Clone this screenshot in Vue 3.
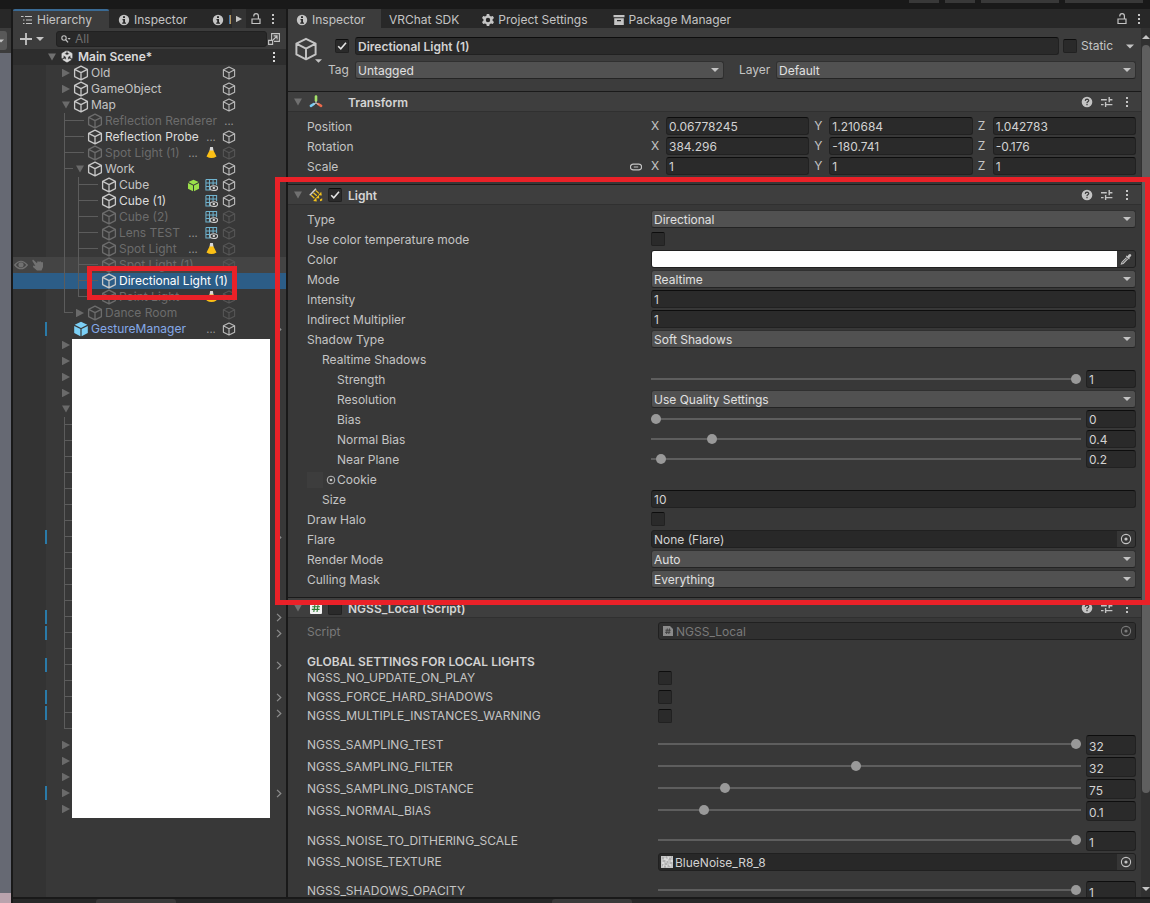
<script setup>
import { ref } from 'vue'

const objects = [
  { name: 'Old', depth: 0, arrow: 'right', cube: 'on' },
  { name: 'GameObject', depth: 0, arrow: 'right', cube: 'on' },
  { name: 'Map', depth: 0, arrow: 'down', cube: 'on' },
  { name: 'Reflection Renderer', depth: 1, dim: true, cube: 'dots' },
  { name: 'Reflection Probe', depth: 1, bright: true, mid: 'dots', cube: 'on' },
  { name: 'Spot Light (1)', depth: 1, dim: true, first: 'dots', mid: 'lamp', cube: 'off' },
  { name: 'Work', depth: 1, arrow: 'down', cube: 'on' },
  { name: 'Cube', depth: 2, first: 'solid', mid: 'mesh', cube: 'on' },
  { name: 'Cube (1)', depth: 2, bright: true, mid: 'mesh', cube: 'on' },
  { name: 'Cube (2)', depth: 2, dim: true, mid: 'mesh', cube: 'off' },
  { name: 'Lens TEST', depth: 2, dim: true, first: 'dots', mid: 'mesh', cube: 'off' },
  { name: 'Spot Light', depth: 2, dim: true, first: 'dots', mid: 'lamp', cube: 'off' },
  { name: 'Spot Light (1)', depth: 2, dim: true, hover: true, cube: 'off' },
  { name: 'Directional Light (1)', depth: 2, selected: true },
  { name: 'Point Light', depth: 2, dim: true, last: true, mid: 'lamp', cube: 'off' },
  { name: 'Dance Room', depth: 1, arrow: 'right', dim: true, last: true, cube: 'off' },
  { name: 'GestureManager', depth: 0, prefab: true, changed: true, chevron: true, mid: 'dots', cube: 'on' },
]

const changedRows = [12, 17, 18, 20, 22, 23, 28]
const hiddenObjects = Array.from({ length: 30 }, (_, i) => ({
  arrow: i < 4 || i > 24 ? 'right' : i === 4 ? 'down' : '',
  branch: i > 4 && i < 25,
  last: i === 24,
  changed: changedRows.includes(i),
}))

const vectors = [
  { label: 'Position', values: ['0.06778245', '1.210684', '1.042783'] },
  { label: 'Rotation', values: ['384.296', '-180.741', '-0.176'] },
  { label: 'Scale', values: ['1', '1', '1'], link: true },
]

const light = [
  { label: 'Type', kind: 'select', value: 'Directional' },
  { label: 'Use color temperature mode', kind: 'check' },
  { label: 'Color', kind: 'color' },
  { label: 'Mode', kind: 'select', value: 'Realtime' },
  { label: 'Intensity', kind: 'text', value: '1' },
  { label: 'Indirect Multiplier', kind: 'text', value: '1' },
  { label: 'Shadow Type', kind: 'select', value: 'Soft Shadows' },
  { label: 'Realtime Shadows', kind: 'none', indent: 1 },
  { label: 'Strength', kind: 'slider', value: '1', at: 1, indent: 2 },
  { label: 'Resolution', kind: 'select', value: 'Use Quality Settings', indent: 2 },
  { label: 'Bias', kind: 'slider', value: '0', at: 0, indent: 2 },
  { label: 'Normal Bias', kind: 'slider', value: '0.4', at: 0.133, indent: 2 },
  { label: 'Near Plane', kind: 'slider', value: '0.2', at: 0.012, indent: 2 },
  { label: 'Cookie', kind: 'none', cookie: true },
  { label: 'Size', kind: 'text', value: '10', indent: 1 },
  { label: 'Draw Halo', kind: 'check' },
  { label: 'Flare', kind: 'object', value: 'None (Flare)' },
  { label: 'Render Mode', kind: 'select', value: 'Auto' },
  { label: 'Culling Mask', kind: 'select', value: 'Everything' },
]

const toggles = ['NGSS_NO_UPDATE_ON_PLAY', 'NGSS_FORCE_HARD_SHADOWS', 'NGSS_MULTIPLE_INSTANCES_WARNING']
const sampling = [
  { label: 'NGSS_SAMPLING_TEST', value: '32', at: 1 },
  { label: 'NGSS_SAMPLING_FILTER', value: '32', at: 0.467 },
  { label: 'NGSS_SAMPLING_DISTANCE', value: '75', at: 0.15 },
  { label: 'NGSS_NORMAL_BIAS', value: '0.1', at: 0.1 },
]
const lightOn = ref(true)
const objectOn = ref(true)
</script>

<template>
  <svg class="sprite" aria-hidden="true">
    <symbol id="i-cube" viewBox="0 0 16 16"><path d="M8 1.2 14.4 4.4V11.6L8 14.9 1.6 11.6V4.4ZM1.6 4.4 8 7.7 14.4 4.4M8 7.7V14.9" fill="none" stroke="currentColor" stroke-width="1.3" stroke-linejoin="round" /></symbol>
    <symbol id="i-solid" viewBox="0 0 16 16"><path d="M8 .8 14.3 3.8 8 7 1.7 3.8ZM1.2 5 7.4 8.1V15.2L1.2 12ZM14.8 5 8.6 8.1V15.2L14.8 12Z" fill="currentColor" /></symbol>
    <symbol id="i-right" viewBox="0 0 8 8"><path d="M0 0H.5L8 4 .5 8H0Z" fill="currentColor" /></symbol>
    <symbol id="i-down" viewBox="0 0 8 8"><path d="M0 .5H8L4 7.5Z" fill="currentColor" /></symbol>
    <symbol id="i-caret" viewBox="0 0 8 4"><path d="M0 0H8L4 4Z" fill="currentColor" /></symbol>
    <symbol id="i-list" viewBox="0 0 12 10"><path d="M4 1.5H11M5 5H11M5 8.5H11" stroke="currentColor" stroke-width="1.2" /><path d="M0 1.5H2.5M2 5H3.5M2 8.5H3.5" stroke="currentColor" stroke-width="1.2" /></symbol>
    <symbol id="i-info" viewBox="0 0 12 12"><circle cx="6" cy="6" r="5.2" fill="currentColor" /><path d="M5 2.3H7V4H5ZM4.5 5H7V8.5H8V9.7H4.2V8.5H5.2V6.2H4.5Z" fill="#282828" /></symbol>
    <symbol id="i-lock" viewBox="0 0 10 12"><path d="M1 6H9V10.5H1ZM2.8 3.5V3A2.2 2.2 0 0 1 7.4 3V6" fill="none" stroke="currentColor" stroke-width="1.2" /></symbol>
    <symbol id="i-menu" viewBox="0 0 4 12"><path d="M1 1H3V3H1ZM1 5H3V7H1ZM1 9H3V11H1Z" fill="currentColor" /></symbol>
    <symbol id="i-gear" viewBox="0 0 14 14"><path d="M5.8 1H8.2L8.6 2.8 10 3.5 11.8 2.9 13 5 11.6 6.2V7.8L13 9 11.8 11.1 10 10.5 8.6 11.2 8.2 13H5.8L5.4 11.2 4 10.5 2.2 11.1 1 9 2.4 7.8V6.2L1 5 2.2 2.9 4 3.5 5.4 2.8ZM7 4.8A2.2 2.2 0 1 0 7 9.2 2.2 2.2 0 0 0 7 4.8Z" fill="currentColor" fill-rule="evenodd" /></symbol>
    <symbol id="i-box" viewBox="0 0 12 12"><path d="M.5 1H11.5V3.3H.5ZM1.2 4.2H10.8V11H1.2ZM4 6V7.3H8V6Z" fill="currentColor" fill-rule="evenodd" /></symbol>
    <symbol id="i-plus" viewBox="0 0 12 12"><path d="M6 0V12M0 6H12" stroke="currentColor" stroke-width="1.8" /></symbol>
    <symbol id="i-search" viewBox="0 0 10 8"><circle cx="3" cy="3" r="2.2" fill="none" stroke="currentColor" stroke-width="1.1" /><path d="M4.6 4.6 7 7.4" stroke="currentColor" stroke-width="1.3" /><path d="M6.5 3H9.7L8.1 4.8Z" fill="currentColor" /></symbol>
    <symbol id="i-open" viewBox="0 0 12 12"><path d="M3.6 7V.6H11.4V8.4H6M5 7 9 3M5.6 2.9H9.1V6.4" fill="none" stroke="currentColor" stroke-width="1.1" /><path d="M.6 7.4H4.6V11.4H.6Z" fill="none" stroke="currentColor" stroke-width="1.1" /></symbol>
    <symbol id="i-unity" viewBox="0 0 16 16"><path d="M8.8 1 13.8 3.9V9.5L12.2 8.6V5.9L9 7.8V11.4L11.2 10.1 12.8 11 8 13.9 3.2 11 4.8 10.1 7 11.4V7.8L3.8 5.9V8.6L2.2 9.5V3.9L7.2 1V2.9L5 4.2 8 6 11 4.2 8.8 2.9Z" fill="currentColor" stroke="currentColor" stroke-width=".7" /></symbol>
    <symbol id="i-lamp" viewBox="0 0 12 14"><path d="M4.6 1H7.4L8 5H4Z" fill="#d9d9d9" /><path d="M4 4.5H8L11 10.5Q6 13.5 1 10.5Z" fill="#fcc015" /></symbol>
    <symbol id="i-mesh" viewBox="0 0 14 14"><path d="M1 1H12.5V7M1 1V12.5H6M1 4.8H12.5M1 8.7H6M4.8 1V12.5M8.7 1V7" fill="none" stroke="#6fb3cf" stroke-width="1.1" /><ellipse cx="9.5" cy="10.3" rx="4" ry="2.6" fill="#383838" stroke="#d0d0d0" stroke-width="1.1" /><circle cx="9.5" cy="10.3" r="1.3" fill="#d0d0d0" /></symbol>
    <symbol id="i-eye" viewBox="0 0 14 10"><path d="M.7 5Q7-2.5 13.3 5 7 12.5.7 5Z" fill="none" stroke="currentColor" stroke-width="1.2" /><circle cx="7" cy="4.8" r="2.6" fill="currentColor" /></symbol>
    <symbol id="i-hand" viewBox="0 0 12 12"><path d="M1 .5 5 4.2 5.5 2.2 7.2 2.8 8.6 2.3 9.4 3.2 11 3.2V8L9.5 11.5H5L1 8 1.3 6.6 3.4 7 .2 1.8Z" fill="currentColor" /></symbol>
    <symbol id="i-chevron" viewBox="0 0 6 10"><path d="M.8 1 5 5 .8 9" fill="none" stroke="currentColor" stroke-width="1.4" /></symbol>
    <symbol id="i-check" viewBox="0 0 14 14"><path d="M3.2 7.2 5.8 9.8 11 3.8" fill="none" stroke="#e4e4e4" stroke-width="1.6" /></symbol>
    <symbol id="i-axes" viewBox="0 0 14 14"><path d="M7 1.5V5.5" stroke="#a6e36a" stroke-width="2.6" stroke-linecap="round" /><path d="M4.8 9 1.9 10.8" stroke="#78cdf5" stroke-width="2.6" stroke-linecap="round" /><path d="M9.2 9 12.1 10.8" stroke="#ee6a4b" stroke-width="2.6" stroke-linecap="round" /><path d="M7 6V8L4.5 9.5M7 8 9.5 9.5" fill="none" stroke="#c9c9c9" stroke-width="1" /></symbol>
    <symbol id="i-sun" viewBox="0 0 14 14"><path d="M.8 7.2 7 .8" stroke="#d0d0d0" stroke-width="1.5" /><path d="M6.6 2.4 10 5.4M4.4 4.8 7.8 7.8M2.2 7.2 5.4 10.2" stroke="#f2c21c" stroke-width="1.2" /><path d="M12.8 7.4 9.2 7.2 12.2 3.8ZM10.3 10.4 7 10 9.8 6.8ZM7.8 13.4 4.2 12.9 7.2 9.6Z" fill="#f2c21c" /><path d="M11 11.4 13.2 10.2V12.6L11 13.2Z" fill="#f2c21c" /></symbol>
    <symbol id="i-script" viewBox="0 0 12 12"><rect width="12" height="12" rx="1" fill="#f2f2f2" /><path d="M5 2 3.8 10M8.2 2 7 10M2.2 4.7H10M1.8 7.4H9.6" stroke="#2c7a33" stroke-width="1.1" /></symbol>
    <symbol id="i-file" viewBox="0 0 10 12"><path d="M0 1H7L10 4V11H0Z" fill="#8b8b8b" /><path d="M4.3 3.5 3.6 9M6.5 3.5 5.8 9M2.4 5.2H7.8M2 7.3H7.4" stroke="#3b3b3b" stroke-width=".9" /></symbol>
    <symbol id="i-help" viewBox="0 0 12 12"><circle cx="6" cy="6" r="5.3" fill="currentColor" /><path d="M4.3 4.9Q4.4 3.2 6 3.2 7.8 3.3 7.7 4.7 7.5 5.5 6.5 6 6 6.3 6 7.2M6 8.1V9.3" fill="none" stroke="#3e3e3e" stroke-width="1.3" /></symbol>
    <symbol id="i-preset" viewBox="0 0 12 12"><path d="M0 3.8H5.8M8.6 3.8H11.4M0 8.6H2.6M5 8.6H11.4M8.2 1V6.2M4.6 6V11" fill="none" stroke="currentColor" stroke-width="1.4" /></symbol>
    <symbol id="i-link" viewBox="0 0 12 8"><path d="M5 1.2H3.2A2.7 2.7 0 0 0 3.2 6.8H5M7 1.2H8.8A2.7 2.7 0 0 1 8.8 6.8H7M3.8 4H8.2M5 1.2H7M5 6.8H7" fill="none" stroke="currentColor" stroke-width="1.2" /></symbol>
    <symbol id="i-target" viewBox="0 0 12 12"><circle cx="6" cy="6" r="4.6" fill="none" stroke="currentColor" stroke-width="1.1" /><circle cx="6" cy="6" r="1.6" fill="currentColor" /></symbol>
    <symbol id="i-dropper" viewBox="0 0 12 12"><path d="M7.4 3.2 8.8 1.6Q10 .6 11 1.6 11.7 2.6 10.6 3.6L9.2 5 9.8 5.7 9 6.5 5.8 3.3 6.6 2.5Z" fill="currentColor" /><path d="M6.6 4.7 2 9.2 1.4 11 3.2 10.4 7.7 5.8" fill="none" stroke="currentColor" stroke-width="1.1" /></symbol>
    <symbol id="i-noise" viewBox="0 0 12 12"><rect width="12" height="12" fill="#c6c6c6" /><path d="M1 2H3M5 1H6M8 3H10M2 5H4M6 6H7M9 7H11M1 9H2M4 8H6M7 10H9M10 1H11M3 11H5" stroke="#9a9a9a" /><path d="M3 3H5M7 2H8M1 7H3M5 4H7M8 9H10M2 10H3M10 5H12M5 10H6" stroke="#efefef" /></symbol>
  </svg>

  <div class="editor">
    <header class="topbar"><span class="stub short"></span><span class="stub short"></span><span class="stub"></span><span class="stub"></span></header>

    <div class="panes">
      <aside class="scene">
        <div class="scene-tab"></div>
        <div class="scene-bar"><button type="button" aria-label="Scene options"><svg width="6" height="4"><use href="#i-caret" /></svg></button></div>
        <div class="scene-view"></div>
        <div class="scene-floor"></div>
      </aside>

      <section class="hierarchy">
        <nav class="tabs">
          <button type="button" class="tab active hier"><svg width="12" height="10"><use href="#i-list" /></svg>Hierarchy</button>
          <button type="button" class="tab insp"><svg width="12" height="12"><use href="#i-info" /></svg>Inspector</button>
          <button type="button" class="tab cut"><svg width="12" height="12"><use href="#i-info" /></svg>I</button>
          <button type="button" class="tool next" aria-label="Next tabs"><svg width="6" height="8"><use href="#i-right" /></svg></button>
          <button type="button" class="tool lock" aria-label="Lock"><svg width="10" height="12"><use href="#i-lock" /></svg></button>
          <button type="button" class="tool" aria-label="Menu"><svg width="4" height="12"><use href="#i-menu" /></svg></button>
        </nav>
        <div class="toolbar">
          <button type="button" class="add" aria-label="Create"><svg width="12" height="12"><use href="#i-plus" /></svg><svg width="8" height="4"><use href="#i-caret" /></svg></button>
          <label class="search"><svg width="10" height="8"><use href="#i-search" /></svg><input type="text" placeholder="All" aria-label="Search" /></label>
          <button type="button" class="open" aria-label="Open search"><svg width="12" height="12"><use href="#i-open" /></svg></button>
        </div>
        <div class="scene-head">
          <svg class="fold" width="8" height="8"><use href="#i-down" /></svg>
          <svg width="14" height="14"><use href="#i-unity" /></svg>
          <strong>Main Scene*</strong>
          <svg class="dots" width="4" height="12"><use href="#i-menu" /></svg>
        </div>
        <div class="tree">
          <div v-for="(o, i) in objects" :key="i" class="node" :class="{ dim: o.dim, bright: o.bright, selected: o.selected, hover: o.hover, prefab: o.prefab }">
            <span class="gutter">
              <template v-if="o.hover"><svg width="14" height="10"><use href="#i-eye" /></svg><svg width="12" height="12"><use href="#i-hand" /></svg></template>
            </span>
            <span class="mark" :class="{ on: o.changed }"></span>
            <span v-if="o.depth === 2" class="rail"></span>
            <span v-if="o.depth" class="branch" :class="{ last: o.last, folded: o.arrow }"></span>
            <span class="arrow"><svg v-if="o.arrow" width="8" height="8"><use :href="'#i-' + o.arrow" /></svg></span>
            <svg class="kind" width="16" height="16"><use :href="o.prefab ? '#i-solid' : '#i-cube'" /></svg>
            <span class="name">{{ o.name }}</span>
            <span class="badge"><template v-if="o.first === 'dots'">...</template><svg v-else-if="o.first" class="green" width="13" height="13"><use href="#i-solid" /></svg></span>
            <span class="badge"><template v-if="o.mid === 'dots'">...</template><svg v-else-if="o.mid" width="13" height="14"><use :href="'#i-' + o.mid" /></svg></span>
            <span class="badge" :class="o.cube"><template v-if="o.cube === 'dots'">...</template><svg v-else-if="o.cube" width="14" height="14"><use href="#i-cube" /></svg></span>
            <span class="tail"><svg v-if="o.chevron" width="6" height="9"><use href="#i-chevron" /></svg></span>
            <span v-if="o.selected" class="mark-frame"></span>
          </div>
          <div class="covered">
            <div v-for="(o, i) in hiddenObjects" :key="i" class="node">
              <span class="gutter"></span>
              <span class="mark" :class="{ on: o.changed }"></span>
              <span v-if="o.branch" class="branch" :class="{ last: o.last }"></span>
              <span v-else class="arrow"><svg width="8" height="8"><use :href="'#i-' + o.arrow" /></svg></span>
              <span class="name"></span>
              <span class="tail"><svg v-if="o.changed" width="6" height="9"><use href="#i-chevron" /></svg></span>
            </div>
            <div class="cover"></div>
          </div>
        </div>
      </section>

      <section class="inspector">
        <nav class="tabs">
          <button type="button" class="tab active main"><svg width="12" height="12"><use href="#i-info" /></svg>Inspector</button>
          <button type="button" class="tab">VRChat SDK</button>
          <button type="button" class="tab proj"><svg width="14" height="14"><use href="#i-gear" /></svg>Project Settings</button>
          <button type="button" class="tab pack"><svg width="12" height="12"><use href="#i-box" /></svg>Package Manager</button>
          <span class="fill"></span>
          <button type="button" class="tool lock" aria-label="Lock"><svg width="10" height="12"><use href="#i-lock" /></svg></button>
          <button type="button" class="tool" aria-label="Menu"><svg width="4" height="12"><use href="#i-menu" /></svg></button>
        </nav>

        <div class="body">
          <div class="content">
            <div class="object">
              <button type="button" class="object-icon" aria-label="Choose icon"><svg width="24" height="24"><use href="#i-cube" /></svg><svg class="mini" width="7" height="4"><use href="#i-caret" /></svg></button>
              <div class="object-fields">
                <div class="line">
                  <span class="check-slot"><label class="check"><input v-model="objectOn" type="checkbox" aria-label="Active" /><svg v-if="objectOn" width="14" height="14"><use href="#i-check" /></svg></label></span>
                  <input class="text bold" type="text" value="Directional Light (1)" aria-label="Name" />
                  <label class="static"><span class="check"><input type="checkbox" /></span>Static</label>
                  <button type="button" class="drop" aria-label="Static options"><svg width="8" height="5"><use href="#i-caret" /></svg></button>
                </div>
                <div class="line">
                  <label class="tag" for="tag">Tag</label>
                  <div class="select"><select id="tag"><option>Untagged</option></select><svg width="8" height="4"><use href="#i-caret" /></svg></div>
                  <label class="layer" for="layer">Layer</label>
                  <div class="select"><select id="layer"><option>Default</option></select><svg width="8" height="4"><use href="#i-caret" /></svg></div>
                </div>
              </div>
            </div>

            <section class="component">
              <header>
                <svg class="fold" width="8" height="8"><use href="#i-down" /></svg>
                <svg class="glyph" width="14" height="14"><use href="#i-axes" /></svg>
                <span class="check-space"></span>
                <strong>Transform</strong>
                <svg width="12" height="12"><use href="#i-help" /></svg><svg width="12" height="12"><use href="#i-preset" /></svg><svg width="12" height="12"><use href="#i-menu" /></svg>
              </header>
              <div class="rows">
                <div v-for="v in vectors" :key="v.label" class="row">
                  <span class="label">{{ v.label }}<svg v-if="v.link" class="link" width="12" height="8"><use href="#i-link" /></svg></span>
                  <div class="vector">
                    <label v-for="(n, k) in v.values" :key="k"><span>{{ 'XYZ'[k] }}</span><input class="text" type="text" :value="n" /></label>
                  </div>
                </div>
              </div>
            </section>

            <section class="component framed">
              <header>
                <svg class="fold" width="8" height="8"><use href="#i-down" /></svg>
                <svg class="glyph" width="14" height="14"><use href="#i-sun" /></svg>
                <label class="check"><input v-model="lightOn" type="checkbox" aria-label="Light enabled" /><svg v-if="lightOn" width="14" height="14"><use href="#i-check" /></svg></label>
                <strong>Light</strong>
                <svg width="12" height="12"><use href="#i-help" /></svg><svg width="12" height="12"><use href="#i-preset" /></svg><svg width="12" height="12"><use href="#i-menu" /></svg>
              </header>
              <div class="rows">
                <div v-for="(r, i) in light" :key="r.label" class="row">
                  <span v-if="r.kind === 'none'" class="label" :class="'in' + (r.indent || 0)">
                    <template v-if="r.cookie"><span class="thumb"></span><svg class="pick" width="10" height="10"><use href="#i-target" /></svg></template>{{ r.label }}
                  </span>
                  <label v-else class="label" :class="'in' + (r.indent || 0)" :for="'light-' + i">{{ r.label }}</label>
                  <div v-if="r.kind === 'select'" class="select"><select :id="'light-' + i"><option>{{ r.value }}</option></select><svg width="8" height="4"><use href="#i-caret" /></svg></div>
                  <span v-else-if="r.kind === 'check'" class="check"><input :id="'light-' + i" type="checkbox" /></span>
                  <input v-else-if="r.kind === 'text'" :id="'light-' + i" class="text" type="text" :value="r.value" />
                  <div v-else-if="r.kind === 'color'" class="color"><button :id="'light-' + i" type="button" class="swatch" aria-label="Color"></button><button type="button" class="side" aria-label="Pick color"><svg width="12" height="12"><use href="#i-dropper" /></svg></button></div>
                  <div v-else-if="r.kind === 'slider'" class="slider"><input :id="'light-' + i" type="range" min="0" max="1" step="any" :value="r.at" /><input class="text" type="text" :value="r.value" :aria-label="r.label + ' value'" /></div>
                  <div v-else-if="r.kind === 'object'" class="objectbox"><input :id="'light-' + i" type="text" readonly :value="r.value" /><button type="button" class="side" aria-label="Select flare"><svg width="12" height="12"><use href="#i-target" /></svg></button></div>
                </div>
              </div>
            </section>

            <section class="component script">
              <header>
                <svg class="fold" width="8" height="8"><use href="#i-down" /></svg>
                <svg class="glyph" width="12" height="12"><use href="#i-script" /></svg>
                <label class="check"><input type="checkbox" aria-label="NGSS_Local enabled" /></label>
                <strong>NGSS_Local (Script)</strong>
                <svg width="12" height="12"><use href="#i-help" /></svg><svg width="12" height="12"><use href="#i-preset" /></svg><svg width="12" height="12"><use href="#i-menu" /></svg>
              </header>
              <div class="rows">
                <div class="row off"><label class="label" for="script">Script</label><div class="objectbox"><svg width="10" height="12"><use href="#i-file" /></svg><input id="script" type="text" disabled value="NGSS_Local" /><button type="button" class="side" aria-label="Select script" disabled><svg width="12" height="12"><use href="#i-target" /></svg></button></div></div>
              </div>
              <h2>GLOBAL SETTINGS FOR LOCAL LIGHTS</h2>
              <div class="rows toggles">
                <div v-for="t in toggles" :key="t" class="row"><label class="label" :for="t">{{ t }}</label><span class="check"><input :id="t" type="checkbox" /></span></div>
              </div>
              <div class="rows tall">
                <div v-for="s in sampling" :key="s.label" class="row"><label class="label" :for="s.label">{{ s.label }}</label><div class="slider"><input :id="s.label" type="range" min="0" max="1" step="any" :value="s.at" /><input class="text" type="text" :value="s.value" :aria-label="s.label + ' value'" /></div></div>
              </div>
              <div class="rows tall">
                <div class="row"><label class="label" for="dither">NGSS_NOISE_TO_DITHERING_SCALE</label><div class="slider"><input id="dither" type="range" min="0" max="1" step="any" value="1" /><input class="text" type="text" value="1" aria-label="Dithering value" /></div></div>
                <div class="row short"><label class="label" for="noise">NGSS_NOISE_TEXTURE</label><div class="objectbox"><svg width="12" height="12"><use href="#i-noise" /></svg><input id="noise" type="text" readonly value="BlueNoise_R8_8" /><button type="button" class="side" aria-label="Select texture"><svg width="12" height="12"><use href="#i-target" /></svg></button></div></div>
              </div>
              <div class="rows tall">
                <div class="row"><label class="label" for="opacity">NGSS_SHADOWS_OPACITY</label><div class="slider"><input id="opacity" type="range" min="0" max="1" step="any" value="1" /><input class="text" type="text" value="1" aria-label="Opacity value" /></div></div>
              </div>
            </section>
          </div>

          <div class="scroll"><svg class="up" width="8" height="4"><use href="#i-caret" /></svg><span class="thumb-bar"></span><svg width="8" height="4"><use href="#i-caret" /></svg></div>
        </div>
      </section>
    </div>

    <footer class="bottom"><span></span><span></span></footer>
  </div>
</template>

<style>
body { margin: 0; background: #191919; }
</style>

<style scoped>
.sprite { position: absolute; width: 0; height: 0; }
.editor { display: flex; flex-direction: column; height: 100vh; overflow: hidden; background: #191919; color: #c4c4c4; font: 12px/16px Inter, "Liberation Sans", sans-serif; }
.editor * { box-sizing: border-box; }
button, input, select { font: inherit; color: inherit; margin: 0; padding: 0; border: 0; background: none; border-radius: 0; appearance: none; outline: none; }
svg { flex: none; display: block; }
.topbar { flex: none; height: 9px; display: flex; justify-content: flex-end; gap: 6px; padding-right: 7px; }
.stub { width: 78px; height: 3px; background: #383838; }
.stub.short { width: 30px; }
.panes { flex: 1; min-height: 0; display: flex; }

.scene { width: 11px; flex: none; margin-right: 2px; display: flex; flex-direction: column; margin-bottom: -6px; }
.scene-tab { height: 19px; background: #282828; }
.scene-bar { height: 25px; background: #3c3c3c; padding-top: 3px; }
.scene-bar button { display: flex; align-items: center; width: 7px; height: 19px; background: #585858; border-radius: 0 3px 3px 0; overflow: hidden; }
.scene-bar svg { margin-left: -2px; }
.scene-view { flex: 1; background: #666973; }
.scene-floor { height: 10px; background: #b9a3ad; }

.tabs { flex: none; display: flex; height: 19px; background: #282828; }
.tab { display: flex; align-items: center; gap: 4px; white-space: nowrap; padding: 2px 8px 0; }
.tab.active { background: #3c3c3c; }
.tool { display: flex; align-items: center; justify-content: center; width: 14px; }
.hierarchy { width: 273px; flex: none; display: flex; flex-direction: column; background: #383838; margin-right: 2px; }
.hier { width: 96px; border-top: 2px solid #3a6a94; padding-top: 0; border-radius: 2px 2px 0 0; }
.insp { padding-left: 9px; }
.cut { padding: 2px 0 0; margin-left: 17px; width: 20px; overflow: hidden; }
.next { background: #333; }
.hierarchy .tabs .lock { margin: 0 3px; }
.toolbar { flex: none; height: 21px; display: flex; align-items: center; background: #3c3c3c; padding: 0 6px 0 7px; gap: 1px; }
.add { display: flex; align-items: center; gap: 4px; width: 35px; }
.search { flex: 1; min-width: 0; height: 16px; display: flex; align-items: center; gap: 4px; padding-left: 4px; background: #282828; border: 1px solid #212121; border-radius: 3px; }
.search input { min-width: 0; flex: 1; height: 14px; }
.search input::placeholder { color: #707070; opacity: 1; }
.scene-head { flex: none; height: 16px; display: flex; align-items: center; gap: 4px; background: #2d2d2d; padding: 0 10px 0 35px; color: #dadada; }
.scene-head strong { font-weight: 600; flex: 1; }
.fold { color: #707070; }
.tree { flex: 1; min-height: 0; background: linear-gradient(90deg, #333 33px, #383838 33px); }
.node { position: relative; display: flex; align-items: center; height: 16px; white-space: nowrap; }
.gutter { width: 32px; flex: none; display: flex; gap: 4px; align-items: center; padding-left: 1px; color: #717171; }
.mark { width: 2px; height: 14px; flex: none; margin-right: 14px; }
.mark.on { background: #2a7aa8; }
.arrow { width: 12px; flex: none; color: #6a6a6a; padding-left: 1px; }
.kind { margin-right: 2px; color: #c8c8c8; }
.name { flex: 1; min-width: 0; }
.dim .name, .dim .kind { color: #6c6c6c; }
.bright .name { color: #dcdcdc; }
.prefab .name { color: #84a9e8; }
.prefab .kind { color: #7bcff5; }
.selected { background: #2c5d87; color: #fff; }
.hover { background: #444; }
.badge { width: 18px; flex: none; display: flex; justify-content: center; color: #969696; font-size: 11px; }
.badge.on { color: #b9b9b9; }
.badge.off { color: #555; }
.green { color: #9be04a; }
.tail { width: 48px; flex: none; display: flex; justify-content: flex-end; padding-right: 4px; color: #8c8c8c; }
.rail { width: 14px; height: 16px; flex: none; margin-left: 3px; margin-right: -3px; border-left: 1px solid #5c5c5c; }
.branch { position: relative; width: 14px; height: 16px; flex: none; margin-left: 3px; margin-right: -3px; border-left: 1px solid #5c5c5c; }
.branch::after { content: ""; position: absolute; left: 0; top: 7px; width: 19px; border-top: 1px solid #5c5c5c; }
.branch.folded::after { width: 8px; }
.branch.last { height: 8px; align-self: flex-start; }
.mark-frame { position: absolute; left: 74px; top: -7px; width: 150px; height: 34px; border: 5px solid #ea2128; z-index: 2; }
.covered { position: relative; }
.cover { position: absolute; left: 59px; right: 16px; top: 2px; height: 479px; background: #fff; }

.inspector { flex: 1; min-width: 0; display: flex; flex-direction: column; background: #383838; }
.main { width: 93px; }
.proj { margin-left: 6px; gap: 3px; }
.pack { margin-left: 9px; }
.fill { flex: 1; }
.inspector .tabs .lock { margin-right: 3px; }
.inspector .tabs { padding-right: 4px; }
.body { flex: 1; min-height: 0; display: flex; overflow-y: clip; }
.content { flex: 1; min-width: 0; }
.object { display: flex; background: #3c3c3c; padding: 9px 5px 12px 6px; }
.object-icon { position: relative; width: 29px; flex: none; align-self: flex-start; }
.object-icon .mini { position: absolute; left: 21px; top: 22px; }
.object-fields { flex: 1; min-width: 0; display: flex; flex-direction: column; gap: 6px; }
.line { display: flex; align-items: center; height: 18px; }
.check-slot { width: 32px; flex: none; padding-left: 12px; }
.line .text { flex: 1; }
.bold { font-weight: 600; }
.static { display: flex; align-items: center; gap: 4px; width: 64px; padding-left: 4px; }
.drop { width: 13px; padding-left: 3px; }
.tag { width: 32px; flex: none; padding-left: 5px; }
.layer { width: 52px; flex: none; padding-left: 15px; }
.line .select { flex: 369 1 0; }
.line .layer + .select { flex-grow: 360; }

.text { min-width: 0; width: 100%; height: 18px; background: #2a2a2a; border: 1px solid #212121; border-top-color: #0d0d0d; border-radius: 3px; padding: 1px 2px 0; color: #d2d2d2; }
.check { position: relative; display: block; width: 14px; height: 14px; flex: none; background: #2a2a2a; border: 1px solid #212121; border-top-color: #0d0d0d; border-radius: 2px; }
.check input { display: block; width: 12px; height: 12px; }
.check svg { position: absolute; left: -1px; top: -1px; pointer-events: none; }
.select { position: relative; flex: 1; min-width: 0; height: 18px; }
.select select { display: block; width: 100%; height: 18px; background: #515151; border: 1px solid #303030; border-bottom-color: #242424; border-radius: 3px; padding: 0 2px; color: #e0e0e0; line-height: 15px; }
.select svg { position: absolute; right: 5px; top: 7px; pointer-events: none; }

.component { position: relative; border-top: 1px solid #1a1a1a; }
.component header { display: flex; align-items: center; height: 20px; background: #3e3e3e; border-bottom: 1px solid #303030; padding: 0 8px 0 6px; }
.component header strong { font-weight: 600; flex: 1; margin-left: 6px; padding-top: 2px; color: #d4d4d4; }
.component header strong ~ svg { margin-left: 8px; }
.glyph { width: 14px; margin: 0 5px 0 7px; }
.check-space { width: 14px; }
.rows { display: flex; flex-direction: column; gap: 2px; padding: 5px 5px 9px 19px; }
.row { display: flex; align-items: center; height: 18px; }
.label { width: 344px; flex: none; display: flex; align-items: center; white-space: nowrap; padding-top: 1px; }
.in1 { padding-left: 15px; }
.in2 { padding-left: 30px; }
.link { margin-left: auto; margin-right: 9px; }
.thumb { width: 16px; height: 16px; background: #3d3d3d; margin-right: 3px; }
.pick { margin-right: 1px; }
.vector { flex: 1; display: grid; grid-template-columns: repeat(3, 1fr); gap: 5px; }
.vector label { display: flex; align-items: center; min-width: 0; }
.vector span { width: 15px; flex: none; }
.color, .objectbox { flex: 1; min-width: 0; display: flex; align-items: center; height: 18px; background: #282828; border: 1px solid #202020; border-radius: 3px; overflow: hidden; }
.swatch { flex: 1; height: 16px; background: #fff; }
.side { width: 18px; height: 16px; flex: none; display: flex; align-items: center; justify-content: center; background: #363636; }
.objectbox input { flex: 1; min-width: 0; padding: 1px 2px 0; color: #d2d2d2; }
.objectbox > svg { margin-left: 2px; }
.slider { flex: 1; min-width: 0; display: flex; align-items: center; gap: 5px; }
.slider .text { width: 50px; flex: none; }
.slider input[type="range"] { flex: 1; min-width: 0; height: 10px; background: linear-gradient(#5e5e5e, #5e5e5e) center / 100% 2px no-repeat; }
.slider input::-webkit-slider-thumb { appearance: none; width: 10px; height: 10px; border-radius: 50%; background: #999; }
.framed::after { content: ""; position: absolute; left: -13px; right: -9px; top: -8px; bottom: -8px; border: 5px solid #ea2128; z-index: 3; pointer-events: none; }
.script .label { width: 351px; }
.script .rows { padding-top: 4px; padding-bottom: 0; }
.off, .off .objectbox input { color: #7a7a7a; }
.off .objectbox, .off .side { background: #303030; }
.off .objectbox > svg { margin-left: 4px; margin-right: 1px; }
h2 { margin: 14px 0 0 19px; font-size: 12px; line-height: 16px; font-weight: 600; color: #d2d2d2; }
.script .toggles { padding-top: 0; gap: 3px; }
.toggles .row { height: 16px; }
.script .toggles + .tall { padding-top: 11px; }
.script .tall { padding-top: 10px; }
.tall .row, .tall .text { height: 20px; }
.tall .row.short { height: 18px; }
.tall .label, .toggles .label { padding: 0 0 1px; }
.tall .slider .text { padding-top: 2px; }
.tall .slider input[type="range"] { margin-bottom: 2px; }

.scroll { width: 9px; flex: none; display: flex; flex-direction: column; align-items: center; background: #313131; padding: 7px 0 6px 1px; }
.up { transform: rotate(180deg); }
.thumb-bar { width: 8px; flex: 748 1 0; margin-top: 6px; margin-bottom: 94px; background: #5f5f5f; border-radius: 4px; }
.bottom { flex: none; height: 6px; margin-left: 13px; display: flex; border-top: 2px solid #191919; background: #282828; }
.bottom span { width: 80px; margin-left: 83px; background: #3a3a3a; border-radius: 3px 3px 0 0; }
.bottom span + span { margin-left: 376px; }
</style>
